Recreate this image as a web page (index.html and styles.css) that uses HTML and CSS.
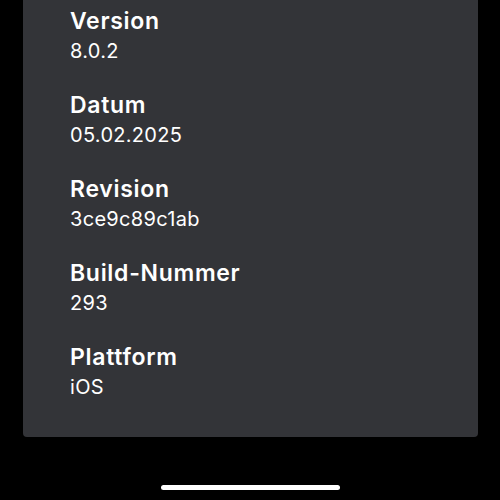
FILE: index.html
```html
<!DOCTYPE html>
<html>
<head>
<meta charset="utf-8">
<link rel="stylesheet" href="styles.css">
</head>
<body>
<div class="screen">
  <section class="card">
    <div class="row"><div class="label">Version</div><div class="value">8.0.2</div></div>
    <div class="row"><div class="label">Datum</div><div class="value">05.02.2025</div></div>
    <div class="row"><div class="label">Revision</div><div class="value">3ce9c89c1ab</div></div>
    <div class="row"><div class="label">Build-Nummer</div><div class="value">293</div></div>
    <div class="row"><div class="label">Plattform</div><div class="value">iOS</div></div>
  </section>
  <div class="home-bar"><span class="indicator"></span></div>
</div>
</body>
</html>
```
FILE: styles.css
```css
html, body {
  margin: 0;
  padding: 0;
  background: #000;
}
.screen {
  width: 500px;
  height: 500px;
  overflow: hidden;
  display: flex;
  flex-direction: column;
  font-family: Inter, "Noto Sans", sans-serif;
  color: #fff;
}
.card {
  margin: -20px 22px 0 23px;
  height: 457px;
  box-sizing: border-box;
  background: #333438;
  border-radius: 0 0 4px 4px;
  padding: 26px 0 0 47px;
  display: flex;
  flex-direction: column;
  gap: 24px;
}
.row {
  display: flex;
  flex-direction: column;
}
.label {
  font-size: 23px;
  font-weight: 600;
  line-height: 30px;
  letter-spacing: 0.7px;
}
.value {
  font-size: 20px;
  font-weight: 400;
  line-height: 30px;
  letter-spacing: 0.3px;
}
.home-bar {
  flex: 1;
  display: flex;
  justify-content: center;
  padding-top: 48px;
}
.indicator {
  display: block;
  width: 179px;
  height: 5px;
  border-radius: 3px;
  background: #fff;
}
```
